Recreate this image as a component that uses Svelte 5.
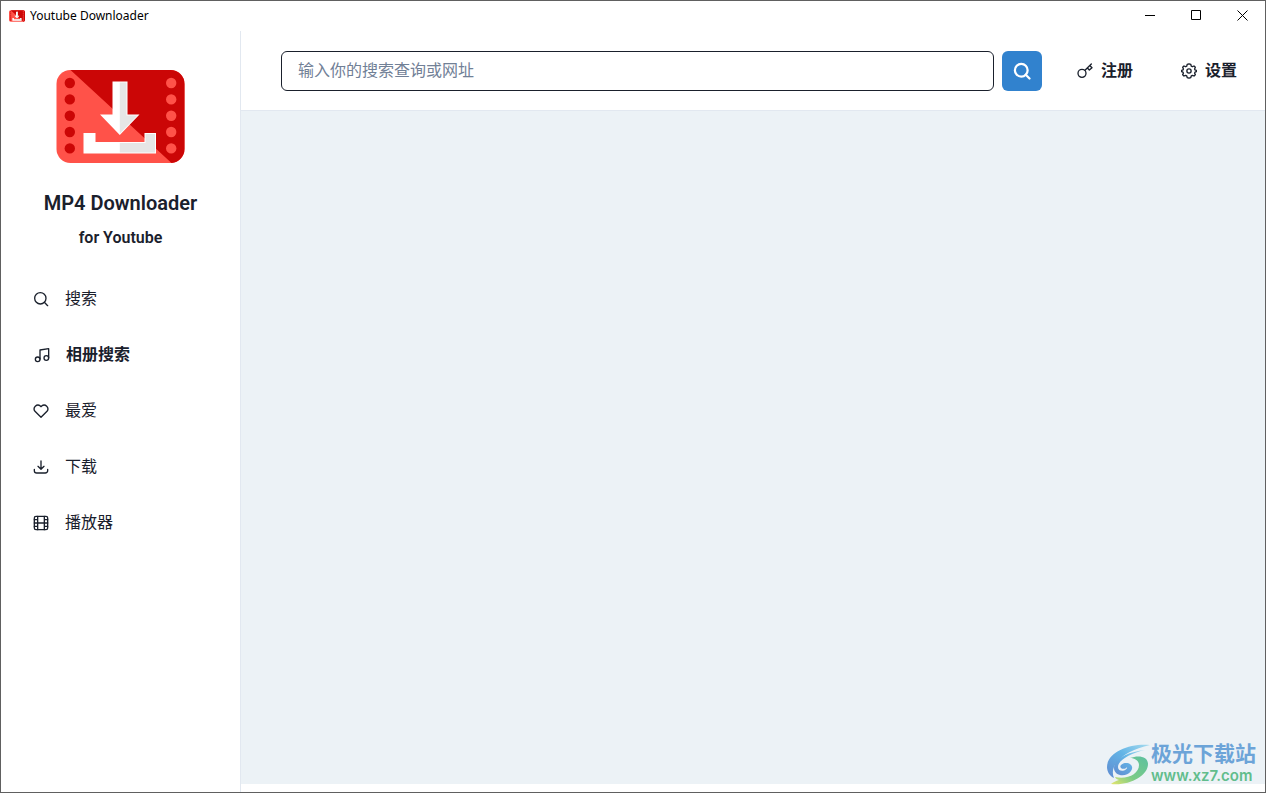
<script>
  let query = $state('');
  const items = [
    { icon: 'search', label: '搜索' },
    { icon: 'music', label: '相册搜索', active: true },
    { icon: 'heart', label: '最爱' },
    { icon: 'download', label: '下载' },
    { icon: 'film', label: '播放器' }
  ];
  const holes = [13, 29.4, 45.7, 62, 78.4];
</script>

{#snippet brand()}
  <svg class="logo" viewBox="0 0 128 93" aria-hidden="true">
    <rect width="128" height="93" rx="14" fill="#ff5249" />
    <path d="M14 0H114a14 14 0 0 1 14 14V79a14 14 0 0 1-13 14Z" fill="#cb0606" />
    {#each holes as y}
      <circle cx="13.3" cy={y} r="5.2" fill="#cb0606" />
      <circle cx="114.7" cy={y} r="5.2" fill="#ff5249" />
    {/each}
    <path d="M56 11.5H71V44.5H83L63.3 65 43.5 44.5H56ZM27 63H39V72H88V63H99.5V83.5H27Z" fill="#fff" />
    <path d="M63.3 12.5H70V45.5H81L63.3 63.5ZM63.3 73H89V64H98.5V82.5H63.3Z" fill="#e6e6e6" />
  </svg>
{/snippet}

{#snippet glyph(name)}
  <svg class="icon" viewBox="0 0 24 24" aria-hidden="true">
    {#if name === 'search'}
      <circle cx="11" cy="11" r="8.5" /><path d="M17 17l5 5" />
    {:else if name === 'music'}
      <path d="M9 18V4.5l13-2V16" /><circle cx="5.5" cy="18.5" r="3.5" /><circle cx="18.5" cy="16.5" r="3.5" />
    {:else if name === 'heart'}
      <path d="M12 21.5 3 12.5A5.7 5.7 0 0 1 11 4.5l1 1 1-1a5.7 5.7 0 0 1 8 8Z" />
    {:else if name === 'download'}
      <path d="M12 3v12M7.5 11l4.5 4.5 4.5-4.5M2 15.5v2a3.5 3.5 0 0 0 3.5 3.5h13a3.5 3.5 0 0 0 3.5-3.5v-2" />
    {:else if name === 'film'}
      <rect x="2" y="2" width="20" height="20" rx="2.5" /><path d="M7 2v20M17 2v20M7 12h10M2 7h5M2 12h5M2 17h5M17 7h5M17 12h5M17 17h5" />
    {:else if name === 'key'}
      <circle cx="7.5" cy="15.5" r="6" /><path d="M12 11 21.5 1.500M15.5 7.500l3 3L22.500 7l-3-3" />
    {:else}
      <circle cx="12" cy="12" r="3.2" />
      <path d="M12 1.2 L14.7 2.2 15.5 4.9 17 5.6 19.5 4.5 21.5 6.5 20.4 9 21 10.4 23 11.2V13L21 13.8 20.4 15.3 21.5 17.5 19.5 19.5 17 18.5 15.5 19.2 14.7 21.8 12 22.8 9.3 21.8 8.5 19.2 7 18.5 4.5 19.5 2.5 17.5 3.6 15.3 3 13.8 1 13V11.2L3 10.4 3.6 9 2.5 6.5 4.5 4.5 7 5.6 8.5 4.9 9.3 2.2Z" />
    {/if}
  </svg>
{/snippet}

<div class="window">
  <div class="titlebar">
    <div class="caption">{@render brand()}<span>Youtube Downloader</span></div>
    <div class="controls">
      <button aria-label="Minimize"><svg viewBox="0 0 11 11"><path d="M0 5.5h10" /></svg></button>
      <button aria-label="Maximize"><svg viewBox="0 0 11 11"><path d="M.5.5h9v9h-9Z" /></svg></button>
      <button aria-label="Close"><svg viewBox="0 0 11 11"><path d="M.5.5l10 10m0-10l-10 10" /></svg></button>
    </div>
  </div>

  <div class="body">
    <aside>
      {@render brand()}
      <h1>MP4 Downloader</h1>
      <h2>for Youtube</h2>
      <nav>
        {#each items as item}
          <a href="#{item.icon}" class:active={item.active}>{@render glyph(item.icon)}<span>{item.label}</span></a>
        {/each}
      </nav>
    </aside>

    <div class="content">
      <header>
        <form onsubmit={(e) => e.preventDefault()}>
          <input type="text" bind:value={query} placeholder="输入你的搜索查询或网址" aria-label="输入你的搜索查询或网址" />
          <button class="go" aria-label="搜索">{@render glyph('search')}</button>
        </form>
        <div class="actions">
          <button>{@render glyph('key')}<span>注册</span></button>
          <button>{@render glyph('gear')}<span>设置</span></button>
        </div>
      </header>
      <main></main>
    </div>
  </div>

  <div class="watermark">
    <svg viewBox="0 0 44 42" aria-hidden="true">
      <defs>
        <linearGradient id="sky" x1="1" y1="0" x2="0" y2="1"><stop stop-color="#a7dcef" /><stop offset=".45" stop-color="#62b4e6" /><stop offset="1" stop-color="#608bd0" /></linearGradient>
        <linearGradient id="leaf" x1="1" y1="0" x2="0" y2="1"><stop stop-color="#5cc0a0" /><stop offset=".6" stop-color="#7bcb86" /><stop offset="1" stop-color="#e5e66d" /></linearGradient>
      </defs>
      <path d="M43 2C23 0 0 9 0 24c0 5 3 9 7 11C1 21 19 7 43 2Z" fill="url(#sky)" />
      <path d="M38 7C20 9 7 16 7 25c0 8 12 10 17 3 3-4 0-8-5-8-4 0-7 3-5 5s6 0 6-1c1 4-9 6-9 0 0-7 13-14 27-17Z" fill="url(#sky)" />
      <path d="M23 15c8-3 18-2 18 6 0 12-19 22-37 20 2-2 5-3 8-4-2-1-3-1-4-3 12 3 24-3 24-12 0-4-4-7-9-7Z" fill="url(#leaf)" />
    </svg>
    <div class="mark-text"><strong>极光下载站</strong><span>www.xz7.com</span></div>
  </div>
</div>

<style>
  :global(body) { margin: 0; }
  * { box-sizing: border-box; }
  .window {
    position: relative;
    display: flex;
    flex-direction: column;
    min-height: 100vh;
    border: 1px solid #606060;
    background: #fff;
    color: #1a202c;
    font: 16px/24px Roboto, "Noto Sans CJK SC", sans-serif;
  }
  button { padding: 0; border: 0; background: none; color: inherit; font: inherit; cursor: pointer; }
  .titlebar { display: flex; justify-content: space-between; height: 30px; }
  .caption { display: flex; align-items: center; gap: 5px; padding-left: 8px; color: #000; font: 12px/16px "Noto Sans", sans-serif; }
  .caption .logo { width: 16px; height: 12px; }
  .controls { display: flex; }
  .controls button { display: grid; place-items: center; width: 46px; padding-bottom: 1px; }
  .controls svg { width: 11px; height: 11px; fill: none; stroke: #000; }
  .body { display: flex; flex: 1; }
  .icon { flex: none; width: 16px; height: 16px; fill: none; stroke: currentColor; stroke-width: 2; stroke-linecap: round; stroke-linejoin: round; }
  aside { display: flex; flex: none; flex-direction: column; align-items: center; width: 240px; padding-top: 39px; border-right: 1px solid #e2e8f0; }
  aside .logo { width: 129px; height: 93px; }
  h1 { margin: 28px 0 0; font-size: 20px; line-height: 24px; font-weight: 600; }
  h2 { margin: 11px 0 0; font-size: 16px; line-height: 24px; font-weight: 600; }
  nav { display: flex; flex-direction: column; align-self: stretch; gap: 16px; margin-top: 29px; padding: 0 16px; }
  nav a { display: flex; align-items: center; gap: 16px; height: 40px; padding: 0 16px; color: inherit; text-decoration: none; }
  nav .active { padding-left: 17px; font-weight: 700; }
  .content { display: flex; flex: 1; flex-direction: column; min-width: 0; padding-bottom: 8px; }
  header { display: flex; align-items: center; gap: 19px; height: 80px; padding: 0 12px 0 40px; border-bottom: 1px solid #e2e8f0; }
  form { display: flex; flex: 1; gap: 8px; min-width: 0; }
  input { flex: 1; min-width: 0; height: 40px; padding: 0 16px; border: 1px solid #1a202c; border-radius: 6px; background: #fff; color: inherit; font: inherit; outline: none; }
  input::placeholder { color: #718096; opacity: 1; }
  .go { display: grid; place-items: center; width: 40px; height: 40px; border-radius: 6px; background: #3182ce; color: #fff; }
  .go .icon { width: 18px; height: 18px; stroke-width: 3; }
  .actions { display: flex; gap: 16px; }
  .actions button { display: flex; align-items: center; gap: 8px; height: 40px; padding: 0 16px; font-weight: 600; }
  main { flex: 1; background: #ecf2f6; }
  .watermark { position: absolute; right: 9px; bottom: 6px; display: flex; align-items: center; }
  .watermark svg { width: 44px; height: 42px; }
  .mark-text { display: flex; flex-direction: column; font-family: Inter, "Noto Sans CJK SC", sans-serif; }
  .mark-text strong { color: #6ca4d8; font-size: 21px; line-height: 24px; }
  .mark-text span { color: #61bd8c; font-size: 15px; line-height: 20px; font-weight: 600; }
</style>
